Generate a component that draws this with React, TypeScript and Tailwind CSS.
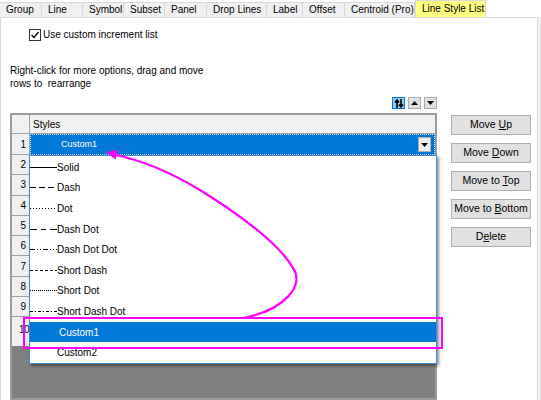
import React from 'react';

const tabs = [
  { label: 'Group', w: 'w-[42px]' },
  { label: 'Line', w: 'w-[41px]' },
  { label: 'Symbol', w: 'w-[41px]' },
  { label: 'Subset', w: 'w-[41px]' },
  { label: 'Panel', w: 'w-[42px]' },
  { label: 'Drop Lines', w: 'w-[60px]' },
  { label: 'Label', w: 'w-[36px]' },
  { label: 'Offset', w: 'w-[42px]' },
  { label: 'Centroid (Pro)', w: 'w-[70px]' },
];

const styles = [
  { name: 'Solid', dash: '' },
  { name: 'Dash', dash: '6 3' },
  { name: 'Dot', dash: '1 2' },
  { name: 'Dash Dot', dash: '7 4 5 4' },
  { name: 'Dash Dot Dot', dash: '5 2 1 2 1 2' },
  { name: 'Short Dash', dash: '3 2' },
  { name: 'Short Dot', dash: '1 1' },
  { name: 'Short Dash Dot', dash: '3 2 1 2' },
];

const buttons: [string, string, string][] = [
  ['Move ', 'U', 'p'],
  ['Move ', 'D', 'own'],
  ['Move to ', 'T', 'op'],
  ['Move to ', 'B', 'ottom'],
  ['D', 'e', 'lete'],
];

function LineSample({ dash }: { dash: string }) {
  return (
    <svg width="27" height="3" className="shrink-0">
      <line x1="0" y1="1.5" x2="27" y2="1.5" stroke="#000" strokeWidth="1" strokeDasharray={dash || undefined} />
    </svg>
  );
}

export default function App() {
  const rowNums = [2, 3, 4, 5, 6, 7, 8, 9];
  return (
    <div className="relative w-[541px] h-[400px] overflow-hidden bg-white text-black text-[10px] font-['Liberation_Sans',Arial,sans-serif] flex flex-col">
      {/* tab strip */}
      <div className="flex items-end h-[17px] shrink-0">
        {tabs.map((t) => (
          <div
            key={t.label}
            className={`${t.w} h-[15px] bg-[#f0f0f0] border-t border-r border-[#d9d9d9] pl-[6px] flex items-center leading-none whitespace-nowrap`}
          >
            {t.label}
          </div>
        ))}
        <div className="w-[71px] h-[17px] bg-[#ffff80] border-t border-r border-l border-[#d9d9d9] pl-[6px] flex items-center leading-none whitespace-nowrap">
          Line Style List
        </div>
      </div>

      <div className="flex flex-1 min-h-0">
        <div className="flex-1 border-t border-l border-r border-[#d9d9d9] pl-[9px] flex flex-col min-h-0">
          {/* checkbox */}
          <div className="flex items-center gap-[2px] mt-[10px] ml-[19px] h-[13px]">
            <div className="w-[12px] h-[12px] border border-[#333] bg-white flex items-center justify-center">
              <svg width="10" height="10" viewBox="0 0 10 10">
                <path d="M1.5 5 L4 7.5 L8.5 2" fill="none" stroke="#000" strokeWidth="1.2" />
              </svg>
            </div>
            <span>Use custom increment list</span>
          </div>

          <div className="mt-[23px] leading-[13px]">
            <div>Right-click for more options, drag and move</div>
            <div>rows to&nbsp; rearrange</div>
          </div>

          <div className="flex flex-1 min-h-0 mt-[7px]">
            {/* grid column */}
            <div className="w-[427px] flex flex-col min-h-0">
              <div className="flex justify-end gap-[3px] h-[12px]">
                <div className="w-[13px] h-[12px] bg-[#99c9ef] border border-[#0078d7] flex items-center justify-center">
                  <svg width="10" height="9" viewBox="0 0 10 9">
                    <path d="M3 9 V2 M1 3.5 L3 1 L5 3.5 M7 0 V7 M5 5.5 L7 8 L9 5.5" fill="none" stroke="#000" strokeWidth="1.6" />
                  </svg>
                </div>
                <div className="w-[13px] h-[12px] bg-[#e1e1e1] border border-[#adadad] flex items-center justify-center">
                  <svg width="7" height="4" viewBox="0 0 7 4"><path d="M0 4 L3.5 0 L7 4 Z" fill="#000" /></svg>
                </div>
                <div className="w-[13px] h-[12px] bg-[#e1e1e1] border border-[#adadad] flex items-center justify-center">
                  <svg width="7" height="4" viewBox="0 0 7 4"><path d="M0 0 L3.5 4 L7 0 Z" fill="#000" /></svg>
                </div>
              </div>

              <div className="mt-[4px] flex-1 border-2 border-[#9b9b9b] bg-[#808080] flex flex-col">
                <div className="flex h-[19px] shrink-0">
                  <div className="w-[18px] bg-[#f0f0f0] border-r border-b border-[#a0a0a0]" />
                  <div className="flex-1 bg-[#f0f0f0] border-b border-[#a0a0a0] pl-[3px] flex items-center">Styles</div>
                </div>
                <div className="flex h-[21px] shrink-0">
                  <div className="w-[18px] bg-[#f0f0f0] border-r border-b border-[#a0a0a0] flex items-center justify-end pr-[3px]">1</div>
                  <div className="flex-1 bg-[#0078d7] border border-dotted border-[#cfe3f7] flex items-center pl-[30px] pr-[3px] text-white text-[9px]">
                    <span className="flex-1">Custom1</span>
                    <div className="w-[13px] h-[15px] bg-[#f0f0f0] border border-[#adadad] flex items-center justify-center">
                      <svg width="7" height="4" viewBox="0 0 7 4"><path d="M0 0 L3.5 4 L7 0 Z" fill="#000" /></svg>
                    </div>
                  </div>
                </div>
                {rowNums.map((n) => (
                  <div key={n} className="flex h-[20.3px] shrink-0">
                    <div className="w-[18px] bg-[#f0f0f0] border-r border-b border-[#a0a0a0] flex items-center justify-end pr-[3px]">{n}</div>
                    <div className="flex-1 bg-white" />
                  </div>
                ))}
                <div className="flex h-[29px] shrink-0">
                  <div className="w-[18px] bg-[#f0f0f0] border-r border-[#a0a0a0] flex items-start justify-end pt-[5px] tracking-[-0.5px]">10</div>
                  <div className="flex-1 bg-white" />
                </div>
              </div>
            </div>

            {/* action buttons */}
            <div className="ml-[14px] mt-[18px] flex flex-col gap-[8px]">
              {buttons.map(([a, u, b]) => (
                <div
                  key={a + u + b}
                  className="w-[80px] h-[20px] bg-[#e1e1e1] border border-[#adadad] flex items-center justify-center text-[10.5px]"
                >
                  <span className="whitespace-pre">
                    {a}
                    <u>{u}</u>
                    {b}
                  </span>
                </div>
              ))}
            </div>
          </div>
        </div>
        <div className="w-[3px] bg-[#f0f0f0]" />
      </div>

      {/* open dropdown list */}
      <div className="absolute left-[29px] top-[155px] w-[408px] h-[209px] bg-white border border-[#3c8ad8] shadow-[2px_2px_3px_rgba(0,0,0,0.45)] pt-[1px]">
        {styles.map((s) => (
          <div key={s.name} className="h-[20.6px] flex items-center">
            <LineSample dash={s.dash} />
            <span>{s.name}</span>
          </div>
        ))}
        <div className="h-[20.6px] flex items-center bg-[#0078d7] text-white pl-[29px]">Custom1</div>
        <div className="h-[20.6px] flex items-center pl-[27px]">Custom2</div>
      </div>

      {/* annotation overlay */}
      <svg className="absolute left-0 top-0 pointer-events-none" width="541" height="400">
        <rect x="24" y="318" width="418" height="30" fill="none" stroke="#ff00ff" strokeWidth="2" />
        <path
          d="M243 318 C 285 310, 305 285, 293 268 C 280 245, 240 215, 200 190 C 170 172, 140 160, 116 155"
          fill="none"
          stroke="#ff00ff"
          strokeWidth="2.2"
        />
        <polygon points="106,152 118,150 115.5,159.5" fill="#ff00ff" />
      </svg>
    </div>
  );
}
